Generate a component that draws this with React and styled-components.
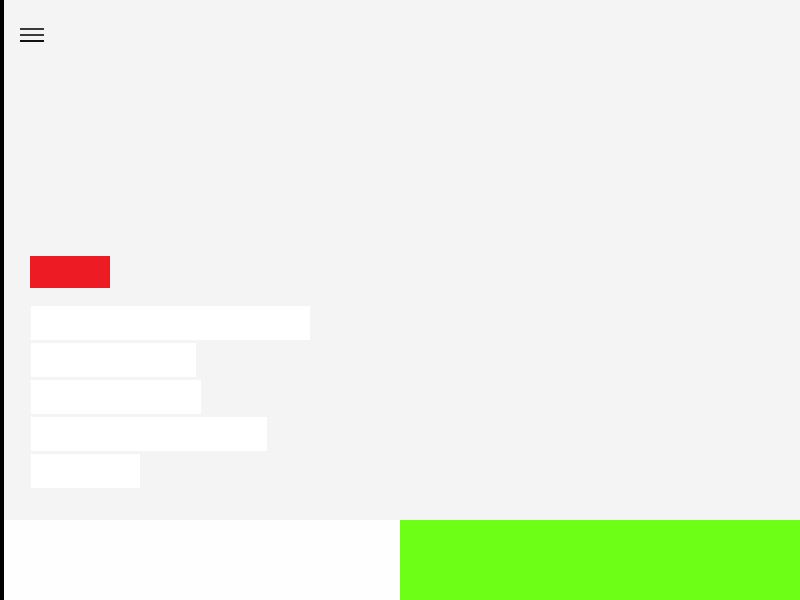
import React from "react";
import styled, { createGlobalStyle } from "styled-components";

const GlobalStyle = createGlobalStyle`
  html, body {
    margin: 0;
    padding: 0;
    background: #f4f4f4;
    font-family: "Liberation Sans", Arial, sans-serif;
  }
`;

const Page = styled.div`
  width: 800px;
  min-height: 600px;
  position: relative;
`;

// thin black rail pinned over the left edge
const Rail = styled.div`
  position: absolute;
  left: 0;
  top: 0;
  bottom: 0;
  width: 4px;
  background: #000;
  z-index: 2;
`;

const Hero = styled.section`
  height: 520px;
  box-sizing: border-box;
  padding: 28px 0 0 20px;
  display: flex;
  flex-direction: column;
`;

const MenuButton = styled.button`
  width: 24px;
  height: 14px;
  padding: 0;
  border: 0;
  background: transparent;
  display: flex;
  flex-direction: column;
  justify-content: space-between;
  cursor: pointer;
`;

const MenuLine = styled.span`
  display: block;
  height: 2px;
  width: 24px;
  background: ${(p) => p.$tone};
`;

const Content = styled.div`
  margin-top: 214px;
  padding-left: 10px;
  display: flex;
  flex-direction: column;
  align-items: flex-start;
`;

const Tag = styled.div`
  width: 80px;
  height: 32px;
  background: #ed1c24;
`;

const Lines = styled.div`
  margin-top: 18px;
  margin-left: 1px;
  display: flex;
  flex-direction: column;
  gap: 3px;
`;

const Line = styled.div`
  height: 34px;
  background: #fff;
`;

const Footer = styled.footer`
  height: 80px;
  display: grid;
  grid-template-columns: 400px 400px;
`;

const Half = styled.div`
  background: ${(p) => p.$bg};
`;

const lineWidths = [279, 165, 170, 236, 109];

export default function App() {
  return (
    <Page>
      <GlobalStyle />
      <Rail />
      <Hero>
        <MenuButton aria-label="menu">
          <MenuLine $tone="#3a3a3a" />
          <MenuLine $tone="#3a3a3a" />
          <MenuLine $tone="#111" />
        </MenuButton>
        <Content>
          <Tag />
          <Lines>
            {lineWidths.map((w, i) => (
              <Line key={i} style={{ width: w }} />
            ))}
          </Lines>
        </Content>
      </Hero>
      <Footer>
        <Half $bg="#fefefe" />
        <Half $bg="#6eff16" />
      </Footer>
    </Page>
  );
}
